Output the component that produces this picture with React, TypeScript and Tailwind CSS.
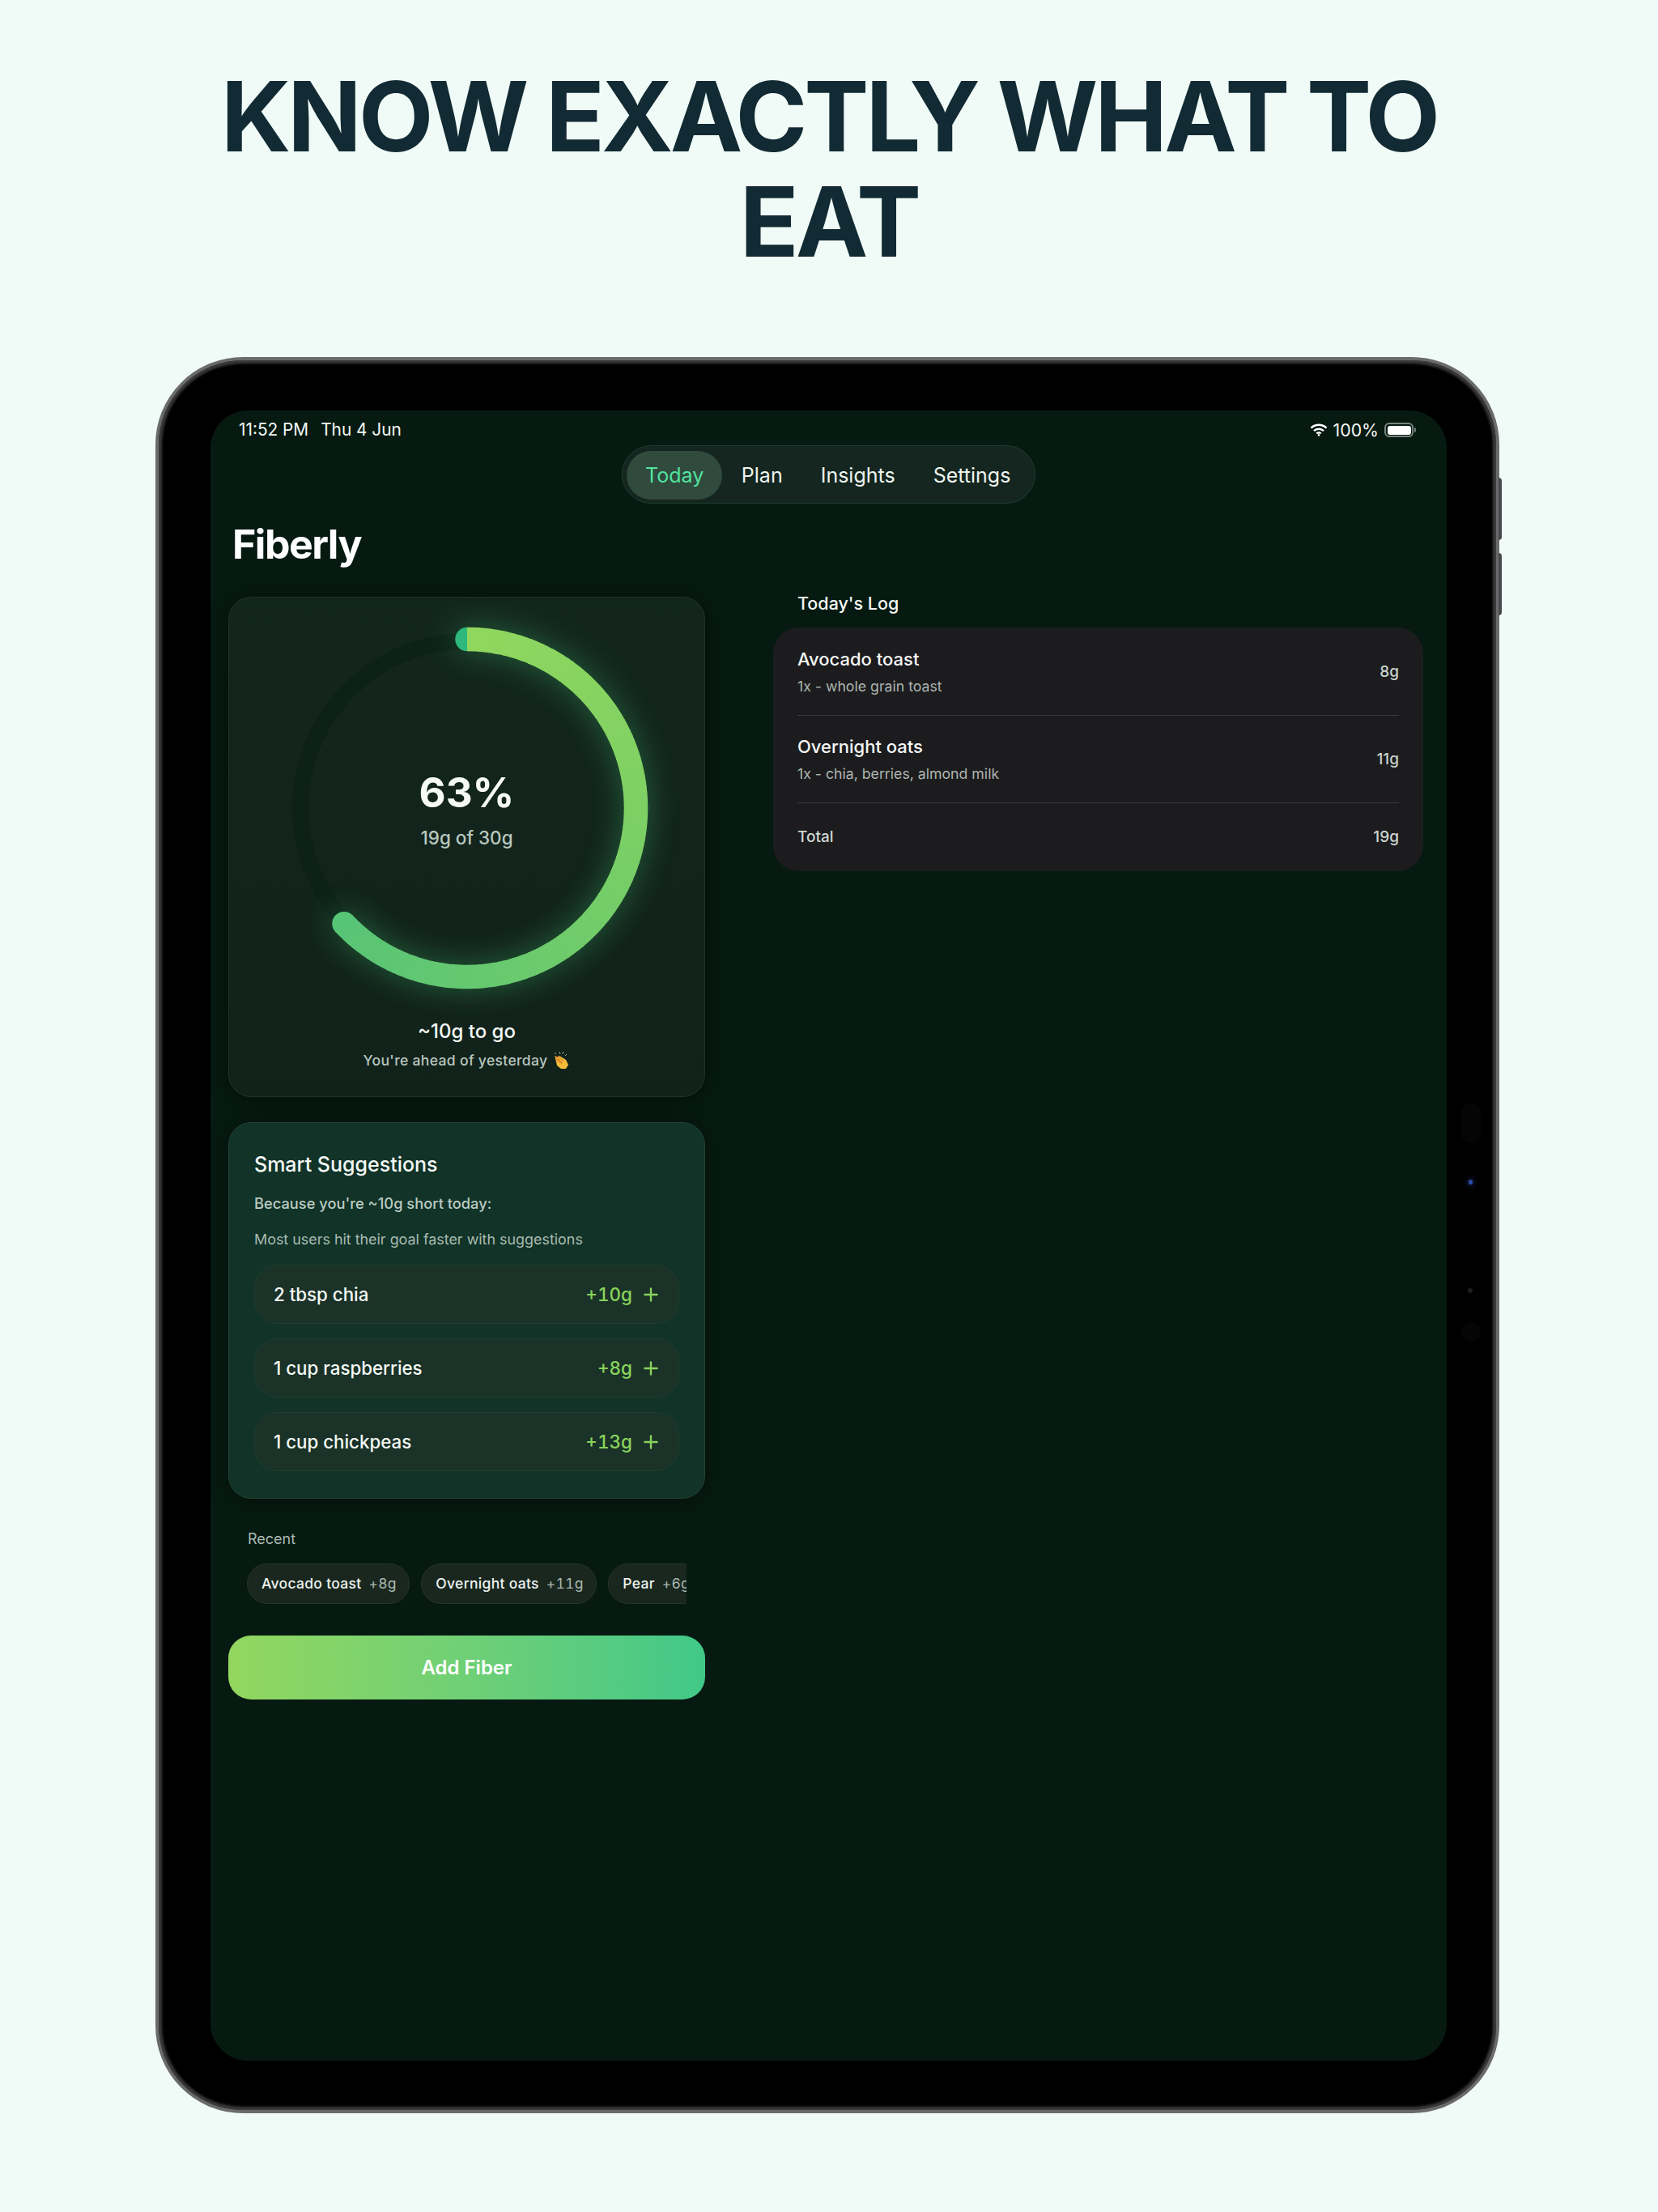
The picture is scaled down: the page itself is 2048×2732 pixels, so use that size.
import React from "react";
import { Plus } from "lucide-react";

const CX = 240;
const CY = 240;
const R = 208.5;
const SWEEP = 226.8;

const stops = [
  { t: 0, c: [145, 215, 94] },
  { t: 0.4, c: [125, 208, 100] },
  { t: 1, c: [88, 196, 118] },
];

function colorAt(t: number) {
  const i = t < stops[1].t ? 0 : 1;
  const a = stops[i];
  const b = stops[i + 1];
  const k = (t - a.t) / (b.t - a.t);
  const m = a.c.map((v, j) => Math.round(v + (b.c[j] - v) * k));
  return `rgb(${m[0]},${m[1]},${m[2]})`;
}

function pt(deg: number) {
  const r = (deg * Math.PI) / 180;
  return [CX + R * Math.sin(r), CY - R * Math.cos(r)];
}

function Ring() {
  const n = 120;
  const segs = Array.from({ length: n }, (_, i) => {
    const a0 = (i / n) * SWEEP;
    const a1 = ((i + 1.15) / n) * SWEEP;
    const p0 = pt(a0);
    const p1 = pt(Math.min(a1, SWEEP));
    return (
      <path
        key={i}
        d={`M${p0[0]} ${p0[1]}A${R} ${R} 0 0 1 ${p1[0]} ${p1[1]}`}
        stroke={colorAt(i / n)}
        strokeWidth={29.5}
        fill="none"
      />
    );
  });
  const end = pt(SWEEP);
  return (
    <svg width={480} height={480} viewBox="0 0 480 480" className="block overflow-visible">
      <circle cx={CX} cy={CY} r={206} fill="none" stroke="#0d2118" strokeWidth={20} />
      <g className="drop-shadow-[0_0_18px_rgba(72,214,120,0.35)]">
        {segs}
        <path d={`M${CX} ${CY - R - 14.75}A14.75 14.75 0 0 0 ${CX} ${CY - R + 14.75}Z`} fill="#2fb87c" />
        <circle cx={end[0]} cy={end[1]} r={14.75} fill={colorAt(1)} />
      </g>
    </svg>
  );
}

function Clap() {
  return (
    <svg width="22" height="24" viewBox="0 0 22 24" className="inline-block">
      <path d="M4 9l5-3 8 5 3 6-3 5-6 0-5-4z" fill="#f7bb3c" />
      <path d="M3 6l5 2 6 6-2 3-7-5z" fill="#eda02e" />
      <path d="M6 10l6 5M8 7l6 5" stroke="#c77a1e" strokeWidth="1" />
      <path d="M9 1l1 3M14 1l-1 3M18 4l-2 2M3 2l2 2" stroke="#9aa8a0" strokeWidth="1" />
    </svg>
  );
}

function Wifi() {
  return (
    <svg width="22" height="16" viewBox="0 0 22 16" fill="none" stroke="#fff" strokeWidth="2.4">
      <path d="M1.5 5.6a13.6 13.6 0 0 1 19 0" />
      <path d="M5 9.2a8.6 8.6 0 0 1 12 0" />
      <path d="M8.3 12.4a4 4 0 0 1 5.4 0" />
      <circle cx="11" cy="14.4" r="1.3" fill="#fff" stroke="none" />
    </svg>
  );
}

function Battery() {
  return (
    <div className="flex items-center">
      <div className="h-[18px] w-[36px] rounded-[6px] border-2 border-[#76847d] p-[1.5px]">
        <div className="h-full w-full rounded-[3px] bg-white" />
      </div>
      <div className="ml-[1px] h-[6px] w-[2px] rounded-r-sm bg-[#76847d]" />
    </div>
  );
}

function Suggestion({ name, grams }: { name: string; grams: string }) {
  return (
    <div className="flex h-[73px] items-center justify-between rounded-[28px] border border-[#223c30] bg-[#1a3227] pl-[23px] pr-[25px]">
      <span className="text-[22.3px] font-medium leading-[30px] text-[#f4f8f5]">{name}</span>
      <span className="flex items-center gap-[14px]">
        <span className="text-[22.5px] font-medium leading-[30px] text-[#88d25c] tabular-nums">{grams}</span>
        <Plus size={26} strokeWidth={2.2} color="#88d25c" className="-mx-[4px]" />
      </span>
    </div>
  );
}

function Chip({ name, grams }: { name: string; grams: string }) {
  return (
    <div className="flex h-[50px] shrink-0 items-center gap-[9px] rounded-full border border-[#26352e] bg-[#19271f] pl-[17px] pr-[15.5px] text-[17.5px] font-medium tracking-[0.3px]">
      <span className="text-[#eef3ef]">{name}</span>
      <span className="font-normal text-[#a9b8b0] tabular-nums">{grams}</span>
    </div>
  );
}

function LogRow({ name, sub, grams, pt, pb }: { name: string; sub: string; grams: string; pt: string; pb: string }) {
  return (
    <div className={`flex items-center justify-between border-b border-[#3a3a3c] ${pt} ${pb}`}>
      <div>
        <div className="text-[22px] font-medium leading-[30px] text-[#f5f7f5]">{name}</div>
        <div className="mt-[6px] text-[17.7px] leading-[26px] text-[#adb5b0]">{sub}</div>
      </div>
      <div className="text-[19px] font-medium leading-[26px] text-[#c9d2cc]">{grams}</div>
    </div>
  );
}

export default function App() {
  return (
    <div className="h-[2732px] w-[2048px] overflow-hidden bg-[#f0fbf7] pt-[79px] [font-family:Inter,sans-serif]">
      <h1 className="mx-auto w-[1698px] text-center text-[120px] font-bold leading-[130px] tracking-[-0.032em] text-[#122a33]">
        KNOW EXACTLY WHAT TO EAT
      </h1>

      <div className="relative ml-[192px] mt-[102px] h-[2169px] w-[1660px] rounded-[108px] border-[4px] border-[#6a6a6c] bg-black pb-[60px] pl-[64px] pr-[60px] pt-[62px] shadow-[inset_0_0_3px_4px_#3a3a3c]">
        <div className="absolute -right-[7px] top-[145px] h-[77px] w-[4px] rounded-r-sm bg-[#48484a]" />
        <div className="absolute -right-[7px] top-[238px] h-[77px] w-[4px] rounded-r-sm bg-[#48484a]" />
        <div className="absolute right-[19px] top-[917px] h-[50px] w-[24px] rounded-full bg-[#050505]" />
        <div className="absolute right-[29px] top-[1012px] h-[6px] w-[5px] rounded-full bg-[#2a4fa8] shadow-[0_0_6px_2px_#141a3c]" />
        <div className="absolute right-[29px] top-[1146px] h-[6px] w-[6px] rounded-full bg-[#1e1e1e]" />
        <div className="absolute right-[19px] top-[1188px] h-[24px] w-[24px] rounded-full bg-[#050505]" />

        <div className="h-[2038px] w-[1527px] overflow-hidden rounded-[46px] bg-[#061a11] text-white">
          {/* status bar */}
          <div className="flex h-[39px] items-end justify-between pl-[35px] pr-[38px] text-[20.8px] leading-[30px] text-[#f4f7f5]">
            <div className="flex gap-[15px]">
              <span>11:52 PM</span>
              <span>Thu 4 Jun</span>
            </div>
            <div className="flex items-center gap-[7px]">
              <Wifi />
              <span className="text-[21.3px]">100%</span>
              <Battery />
            </div>
          </div>

          {/* nav */}
          <div className="mt-[4px] flex justify-center">
            <div className="flex h-[72px] items-center rounded-full border border-[#1f3d31] bg-[#14261f] pl-[5px] pr-[6px] pt-[1px] text-[25px] leading-[32px] text-[#eef3ef]">
              <div className="flex h-[60px] items-center rounded-full bg-[#304a3e] px-[23px] text-[#50e3a0]">Today</div>
              <div className="px-[23.5px]">Plan</div>
              <div className="px-[23.5px]">Insights</div>
              <div className="px-[23.5px]">Settings</div>
            </div>
          </div>

          <div className="ml-[27px] mt-[20px] text-[50px] font-bold leading-[60px] tracking-[-0.03em] text-white">Fiberly</div>

          {/* columns */}
          <div className="mt-[28px] flex gap-[84px] pl-[22px]">
            <div className="w-[589px] pt-[7px]">
              <div className="flex h-[618px] flex-col items-center rounded-[28px] border border-[#20332a] bg-gradient-to-b from-[#13261e] to-[#11221a] shadow-[0_2px_22px_rgba(0,0,0,0.45)]">
                <div className="relative mt-[20px]">
                  <Ring />
                  <div className="absolute inset-0 flex flex-col items-center justify-center">
                    <div className="mt-[2px] text-[51px] font-bold leading-[64px] text-[#f6faf7]">63%</div>
                    <div className="mt-[8px] text-[22.5px] font-medium leading-[32px] text-[#b8c7be]">19g of 30g</div>
                  </div>
                </div>
                <div className="mt-[20px] text-[24px] font-medium leading-[32px] text-[#f4f8f5]">~10g to go</div>
                <div className="mt-[7px] flex items-center gap-[6px] text-[17.6px] font-medium leading-[26px] tracking-[0.3px] text-[#b9c6bf]">
                  You're ahead of yesterday <Clap />
                </div>
              </div>

              <div className="mt-[31px] h-[465px] rounded-[28px] border border-[#224335] bg-[#113328] px-[31px] pt-[34px] shadow-[0_2px_22px_rgba(0,0,0,0.4)]">
                <div className="text-[25px] font-medium leading-[34px] text-[#f4f8f5]">Smart Suggestions</div>
                <div className="mt-[18px] text-[18.3px] font-medium leading-[26px] text-[#bccbc2]">Because you're ~10g short today:</div>
                <div className="mt-[19px] text-[17.9px] leading-[26px] text-[#a9bbb1]">Most users hit their goal faster with suggestions</div>
                <div className="mt-[18px] flex flex-col gap-[18px]">
                  <Suggestion name="2 tbsp chia" grams="+10g" />
                  <Suggestion name="1 cup raspberries" grams="+8g" />
                  <Suggestion name="1 cup chickpeas" grams="+13g" />
                </div>
              </div>

              <div className="ml-[24px] mt-[37px] text-[18px] leading-[26px] text-[#a9bbb1]">Recent</div>
              <div className="ml-[23px] mt-[17px] flex w-[543px] gap-[14px] overflow-hidden">
                <Chip name="Avocado toast" grams="+8g" />
                <Chip name="Overnight oats" grams="+11g" />
                <Chip name="Pear" grams="+6g" />
              </div>

              <div className="mt-[39px] flex h-[79px] items-center justify-center rounded-[28px] bg-gradient-to-r from-[#92d75e] to-[#40c888] text-[24px] font-semibold text-white">
                Add Fiber
              </div>
            </div>

            <div className="w-[803px]">
              <div className="pl-[30px] text-[21.5px] font-medium leading-[30px] text-[#f4f8f5]">Today's Log</div>
              <div className="mt-[15px] rounded-[32px] bg-[#1c1c1e] px-[30px]">
                <LogRow name="Avocado toast" sub="1x - whole grain toast" grams="8g" pt="pt-[24px]" pb="pb-[22px]" />
                <LogRow name="Overnight oats" sub="1x - chia, berries, almond milk" grams="11g" pt="pt-[23px]" pb="pb-[22px]" />
                <div className="flex h-[84px] items-center justify-between text-[19px] font-medium text-[#ced6d0]">
                  <span>Total</span>
                  <span>19g</span>
                </div>
              </div>
            </div>
          </div>
        </div>
      </div>
    </div>
  );
}
